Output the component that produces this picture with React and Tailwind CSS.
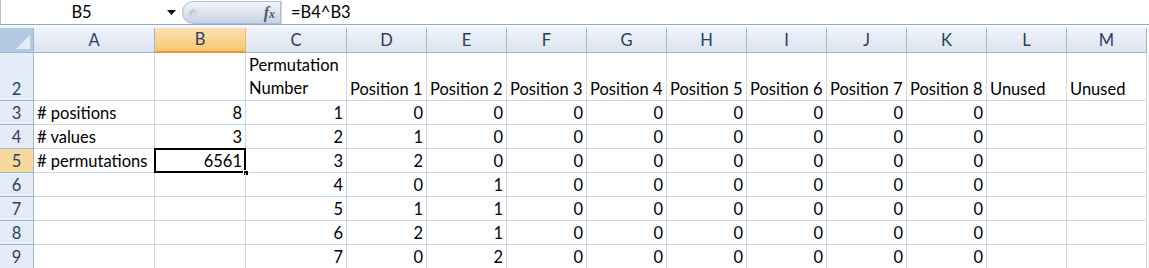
import React from "react";

const COLS = ["A", "B", "C", "D", "E", "F", "G", "H", "I", "J", "K", "L", "M"];

const rows = [
  { n: 3, a: "# positions", b: "8", c: "1", v: [0, 0, 0, 0, 0, 0, 0, 0] },
  { n: 4, a: "# values", b: "3", c: "2", v: [1, 0, 0, 0, 0, 0, 0, 0] },
  { n: 5, a: "# permutations", b: "6561", c: "3", v: [2, 0, 0, 0, 0, 0, 0, 0] },
  { n: 6, a: "", b: "", c: "4", v: [0, 1, 0, 0, 0, 0, 0, 0] },
  { n: 7, a: "", b: "", c: "5", v: [1, 1, 0, 0, 0, 0, 0, 0] },
  { n: 8, a: "", b: "", c: "6", v: [2, 1, 0, 0, 0, 0, 0, 0] },
  { n: 9, a: "", b: "", c: "7", v: [0, 2, 0, 0, 0, 0, 0, 0] },
];

const font = { fontFamily: "Lato, 'Open Sans', sans-serif" };

function Cell({ children, right, className = "" }) {
  return (
    <div
      className={`h-[24px] border-r border-b border-[#d0d7e5] flex items-end px-[3px] leading-[22px] text-[16.5px] text-black whitespace-nowrap overflow-visible ${
        right ? "justify-end" : "justify-start"
      } ${className}`}
    >
      {children}
    </div>
  );
}

function RowHead({ n, selected, tall }) {
  return (
    <div
      className={`${tall ? "h-[48px]" : "h-[24px]"} border-r border-b border-[#9eb6ce] flex items-end justify-center leading-[22px] text-[16.5px] text-[#27415f] ${
        selected ? "bg-[#f8d89c]" : "bg-[#e4ecf7]"
      }`}
    >
      {n}
    </div>
  );
}

export default function App() {
  return (
    <div className="w-[1149px] h-[268px] overflow-hidden bg-white" style={font}>
      {/* Formula bar */}
      <div className="h-[25px] flex items-stretch bg-white border-b border-[#8eabcf]">
        <div className="w-[160px] flex items-center justify-center border-l border-[#b9c3cf] text-[16.5px] text-black pl-[2px]">
          B5
        </div>
        <div className="w-[22px] flex items-center justify-center">
          <svg width="9" height="5" viewBox="0 0 9 5">
            <path d="M0 0 H9 L4.5 5 Z" fill="#111" />
          </svg>
        </div>
        <div className="w-[99px] h-[23px] mt-px rounded-l-[11px] border border-[#aebdd2] bg-gradient-to-b from-[#f2f5fa] via-[#dce4ef] to-[#c6d2e3] flex items-center justify-between pl-[6px] pr-[5px]">
          <div className="w-[8px] h-[8px] rounded-full bg-gradient-to-br from-[#b0b9c5] to-[#eef2f7] border border-[#c7d0dc]" />
          <span
            className="text-[16px] italic text-[#505a66] font-bold"
            style={{ fontFamily: "'Liberation Serif', serif" }}
          >
            f<span className="text-[12px]">x</span>
          </span>
        </div>
        <div className="flex-1 flex items-center pl-[9px] text-[16.5px] text-black border-l border-[#c8d2de]">
          =B4^B3
        </div>
      </div>
      <div className="h-[3px] bg-[#f3f6fa]" />

      {/* Grid */}
      <div className="grid grid-cols-[34px_121px_91px_101px_repeat(10,80px)]">
        {/* corner */}
        <div className="h-[25px] border-r border-b border-[#9eb6ce] bg-[#b4c8e3] relative overflow-hidden">
          <svg className="absolute right-[3px] bottom-[3px]" width="14" height="14" viewBox="0 0 14 14">
            <path d="M14 0 V14 H0 Z" fill="#e3ebf5" />
          </svg>
        </div>
        {COLS.map((c) => (
          <div
            key={c}
            className={`h-[25px] border-r flex items-center justify-center text-[16.5px] text-[#27415f] ${
              c === "B"
                ? "bg-gradient-to-b from-[#fbe2b3] to-[#f6c872] border-b-2 border-b-[#f29436] border-r-[#f0b860]"
                : "bg-gradient-to-b from-[#f0f4fa] to-[#dbe4f0] border-b border-[#9eb6ce]"
            }`}
          >
            {c}
          </div>
        ))}

        {/* row 2 */}
        <RowHead n={2} tall />
        <div className="h-[48px] border-r border-b border-[#d0d7e5]" />
        <div className="h-[48px] border-r border-b border-[#d0d7e5]" />
        <div className="h-[48px] border-r border-b border-[#d0d7e5] flex flex-col justify-end px-[3px] text-[16.5px] leading-[23px]">
          <span>Permutation</span>
          <span>Number</span>
        </div>
        {["Position 1", "Position 2", "Position 3", "Position 4", "Position 5", "Position 6", "Position 7", "Position 8", "Unused", "Unused"].map((t, i) => (
          <div
            key={i}
            className="h-[48px] border-r border-b border-[#d0d7e5] flex items-end px-[3px] text-[16.5px] leading-[22px] whitespace-nowrap"
          >
            {t}
          </div>
        ))}

        {rows.map((r) => (
          <React.Fragment key={r.n}>
            <RowHead n={r.n} selected={r.n === 5} />
            <Cell>{r.a}</Cell>
            <Cell right className="relative">
              {r.b}
              {r.n === 5 && (
                <>
                  <div className="absolute -left-px -top-px w-[92px] h-[25px] border-2 border-black pointer-events-none" />
                  <div className="absolute right-[-4px] bottom-[-4px] w-[6px] h-[6px] bg-black border border-white" />
                </>
              )}
            </Cell>
            <Cell right>{r.c}</Cell>
            {r.v.map((v, i) => (
              <Cell key={i} right>
                {v}
              </Cell>
            ))}
            <Cell />
            <Cell />
          </React.Fragment>
        ))}
      </div>
    </div>
  );
}
